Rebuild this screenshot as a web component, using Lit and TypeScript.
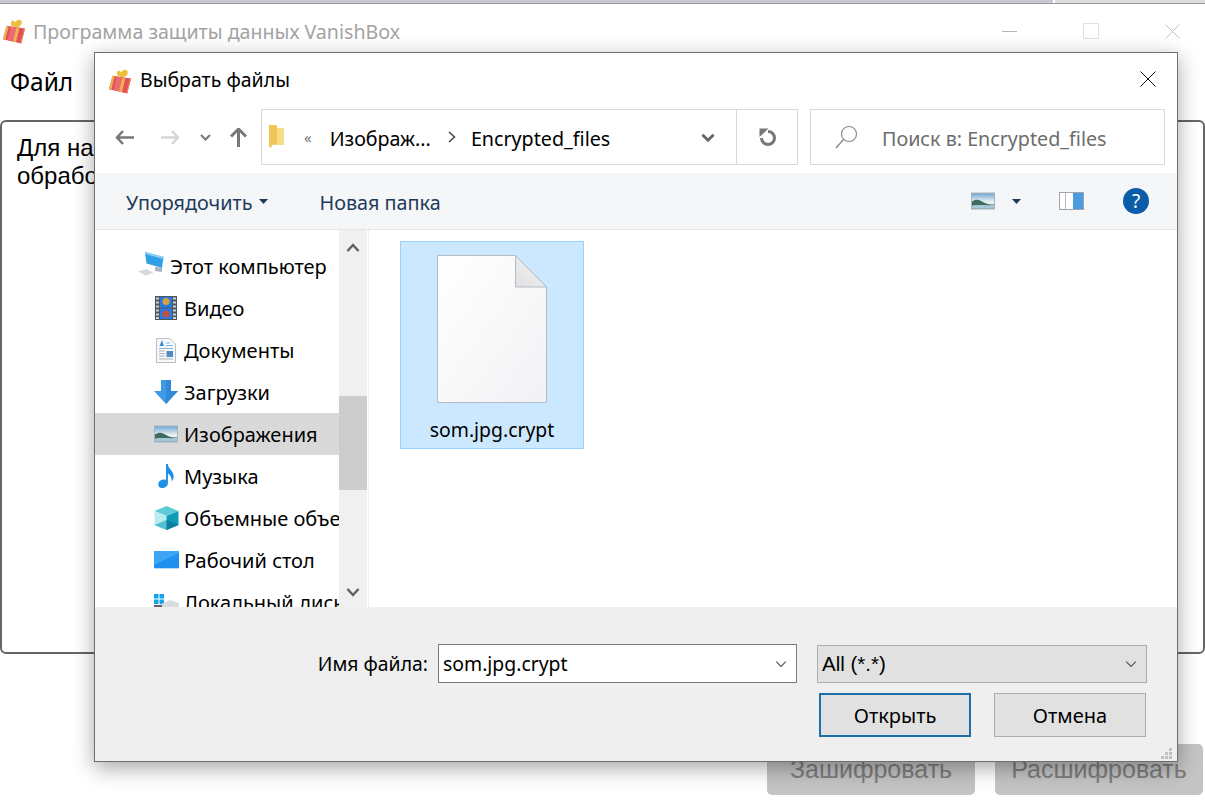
import { LitElement, css, html, svg } from 'lit';
import { customElement } from 'lit/decorators.js';

const gift = (size: number) => html`<svg width=${size} height=${size} viewBox="0 0 26 26">
  <path d="M5 7 L24 10 L20 25.500 L1 21 Z" fill="#e2505c" />
  <path d="M9 8 L18 9.300 L14.500 24 L6 22 Z" fill="#ee6a72" />
  <path d="M4.500 7 L7 7.400 L3.500 21.600 L1 21 Z" fill="#efb04a" />
  <path d="M15 8.800 L18 9.300 L14.500 24.200 L11.500 23.500 Z" fill="#eeb34a" />
  <path d="M23 9.800 L24 10 L20 25.500 L19 25.300 Z" fill="#e8954a" />
  <path d="M10 7 C8 2 11 0 14 3.500 C15 0 20 0 20.500 3 C21 6 18 8.500 14 8.500 Z" fill="#ecbf3c" />
</svg>`;

const landscape = (w: number, h: number) => html`<svg width=${w} height=${h} viewBox="0 0 24 17">
  <defs>
    <linearGradient id="sky" x1="0" y1="0" x2="0" y2="1">
      <stop offset="0" stop-color="#6fa7d4" /><stop offset="0.55" stop-color="#e8eff2" />
    </linearGradient>
  </defs>
  <rect x="0.5" y="0.5" width="23" height="16" fill="url(#sky)" stroke="#a9b3bb" />
  <path d="M1 9 C5 6 9 7 12 9.500 C16 12 20 12 23 12 L23 16 L1 16 Z" fill="#3e6b5d" />
  <path d="M1 13 C8 12 16 13 23 12.500 L23 16 L1 16 Z" fill="#a6c8d6" />
</svg>`;

const icons: Record<string, unknown> = {
  pc: html`<svg width="28" height="28" viewBox="0 0 28 28">
    <path d="M18 15 L25 16 L25 20 L18 19 Z" fill="#aab4bb" />
    <path d="M8 0 L26.500 5 L25 16 L9.500 11.500 Z" fill="#2f9fe6" />
    <path d="M8 0 L26.500 5 L26.200 7 L8.200 2 Z" fill="#8ad0f4" />
    <path d="M.5 19.500 L9 17 L16.500 20.500 L9 23.500 Z" fill="#d5dade" />
  </svg>`,
  video: html`<svg width="22" height="24" viewBox="0 0 22 24">
    <rect x="0" y="0" width="22" height="24" fill="#50555a" />
    <rect x="5" y="1" width="12" height="10.500" fill="#2878e0" />
    <rect x="5" y="12.500" width="12" height="10.500" fill="#2878e0" />
    <circle cx="11" cy="5.500" r="3.500" fill="#d9a23c" />
    <circle cx="11" cy="18" r="3.500" fill="#c2503c" />
    <path d="M1 2.500h3M1 6.500h3M1 10.500h3M1 14.500h3M1 18.500h3M1 22h3M18 2.500h3M18 6.500h3M18 10.500h3M18 14.500h3M18 18.500h3M18 22h3" stroke="#c5d3df" stroke-width="2" />
  </svg>`,
  docs: html`<svg width="20" height="25" viewBox="0 0 20 25">
    <path d="M.5 .5 H14 L19.500 6 V24.500 H.5 Z" fill="#f7f8f9" stroke="#b8bfc6" />
    <path d="M3.500 8 L6 2 L8 8 Z" fill="#3f8fd8" />
    <path d="M10 5 H14 M10 7.500 H17 M3 10.500 H17" stroke="#8cb4d8" />
    <path d="M3 13 H9 M3 15.500 H9 M3 18 H9 M3 21 H17" stroke="#a9b6c0" />
    <rect x="10.500" y="13" width="6.500" height="6" fill="#4e8cc2" />
  </svg>`,
  down: html`<svg width="24" height="24" viewBox="0 0 24 24">
    <path d="M7 0 H17 V11 H24 L12 24 L0 11 H7 Z" fill="#3f9ae6" />
    <path d="M12 0 H17 V11 H24 L12 24 Z" fill="#3389d8" />
  </svg>`,
  pictures: landscape(24, 18),
  music: html`<svg width="18" height="25" viewBox="0 0 18 26">
    <path d="M9 0 H11 C11 5 17 7 17 13 C17 15 16 17 15 18 C15 14 13 11 11 10 V20 C11 23 8 25 5 25 C2 25 1 23 1 21 C1 18 4 16 7 16 C8 16 8.500 16.200 9 16.500 Z" fill="#1e8fe6" />
  </svg>`,
  cube: html`<svg width="25" height="24" viewBox="0 0 24 24">
    <path d="M12 0 L24 5 L12 10 L0 5 Z" fill="#5ccbd6" />
    <path d="M0 5 L12 10 V24 L0 19 Z" fill="#b9ebef" />
    <path d="M12 10 L24 5 V19 L12 24 Z" fill="#0f9ab8" />
    <path d="M0 19 L12 14 V24 Z" fill="#4fc0cf" />
    <path d="M24 19 L12 14 V24 Z" fill="#0b7f9c" />
  </svg>`,
  desktop: html`<svg width="25" height="18" viewBox="0 0 25 18">
    <rect x="0" y="0" width="25" height="18" fill="#1e90f0" />
    <path d="M0 0 H25 V2 L0 14 Z" fill="#3ca6f5" />
    <path d="M0 17.500 H25" stroke="#b7dcf5" />
  </svg>`,
  drive: html`<svg width="25" height="24" viewBox="0 0 25 24">
    <path d="M0 4h4.500v4.500h-4.500zM5.500 4h4.500v4.500h-4.500zM0 9.500h4.500v4.500h-4.500zM5.500 9.500h4.500v4.500h-4.500z" fill="#12a5ea" />
    <path d="M3 16 L16 10 L25 13 V19 L12 24 L3 20 Z" fill="#d8dcdf" />
    <path d="M0 15 L8 15 L8 18 L0 18 Z" fill="#5b6268" />
  </svg>`,
};

const navItems = [
  { icon: 'pc', label: 'Этот компьютер', top: true },
  { icon: 'video', label: 'Видео' },
  { icon: 'docs', label: 'Документы' },
  { icon: 'down', label: 'Загрузки' },
  { icon: 'pictures', label: 'Изображения', selected: true },
  { icon: 'music', label: 'Музыка' },
  { icon: 'cube', label: 'Объемные объекты' },
  { icon: 'desktop', label: 'Рабочий стол' },
  { icon: 'drive', label: 'Локальный диск (C:)' },
];

const chevron = (w: number, color: string, sw = 1) => html`<svg width=${w} height=${Math.ceil(w * 0.6)} viewBox="0 0 10 6">
  <path d="M1 1 L5 5 L9 1" fill="none" stroke=${color} stroke-width=${sw} />
</svg>`;

const caret = html`<svg width="9" height="5" viewBox="0 0 9 5"><path d="M0 0 H9 L4.500 5 Z" fill="#1e3a5a" /></svg>`;

const cross = (size: number, color: string) => html`<svg width=${size} height=${size} viewBox="0 0 16 16">
  ${svg`<path d="M.5 .5 L15.500 15.500 M15.500 .5 L.5 15.500" stroke=${color} stroke-width="1" fill="none" />`}
</svg>`;

@customElement('app-root')
class AppRoot extends LitElement {
  static styles = css`
    :host {
      display: block;
      position: relative;
      width: 1205px;
      height: 803px;
      overflow: hidden;
      background: #fff;
      font-family: 'Liberation Sans', Arial, sans-serif;
      color: #000;
    }

    /* main window behind the dialog */
    .strip {
      display: flex;
      height: 3px;
      border-bottom: 1px solid #9a9aa2;
    }
    .strip i {
      flex: 1;
      background: #c9c9d6;
    }
    .strip b {
      width: 150px;
      margin-left: 2px;
      background: #dcdcdc;
    }

    .titlebar {
      display: flex;
      align-items: center;
      height: 54px;
      padding-left: 2px;
    }
    .titlebar .name {
      margin-left: 6px;
      font: 19.6px 'Noto Sans', sans-serif;
      color: #a3a3a3;
      flex: 1;
    }
    .controls {
      display: flex;
      align-items: center;
      gap: 66px;
      padding-right: 25px;
    }
    .min {
      width: 15px;
      height: 1px;
      background: #b5b5b5;
    }
    .max {
      width: 14px;
      height: 14px;
      border: 1px solid #e2e2e2;
    }

    .menu {
      padding: 8px 10px 0;
      height: 51px;
      box-sizing: border-box;
      font: 24.5px/32px 'Noto Sans', sans-serif;
    }

    .output {
      height: 534px;
      box-sizing: border-box;
      margin: 11px 0 0;
      border: 2px solid #666;
      border-radius: 6px;
      padding: 12px 15px;
      font-size: 24px;
      line-height: 28px;
    }

    .actions {
      display: flex;
      justify-content: flex-end;
      gap: 20px;
      padding: 90px 2px 0 0;
    }
    .actions button {
      width: 208px;
      height: 51px;
      border: none;
      border-radius: 5px;
      background: #c4c4c4;
      color: #7d7d7d;
      font: 25px 'Liberation Sans', Arial, sans-serif;
    }

    /* file dialog */
    .dialog {
      position: absolute;
      left: 94px;
      top: 52px;
      width: 1084px;
      height: 710px;
      box-sizing: border-box;
      display: flex;
      flex-direction: column;
      background: #fff;
      border: 1px solid #6f6f6f;
      box-shadow: 0 6px 20px rgba(0, 0, 0, 0.35);
      font-family: 'Noto Sans', sans-serif;
      font-size: 20px;
    }

    .dlg-title {
      display: flex;
      align-items: center;
      height: 56px;
      flex: none;
      padding: 0 21px 0 13px;
    }
    .dlg-title span {
      flex: 1;
      margin-left: 7px;
      margin-top: -4px;
      font-size: 19.5px;
    }
    .dlg-title svg:last-child {
      margin-top: -4px;
    }

    .navbar {
      display: flex;
      align-items: center;
      height: 56px;
      flex: none;
      margin-bottom: 8px;
      padding: 0 12px 0 20px;
      font-size: 19.7px;
    }
    .nav-btns {
      display: flex;
      align-items: center;
      width: 146px;
      flex: none;
    }
    .nav-btns svg:nth-child(2) {
      margin-left: 27px;
    }
    .nav-btns svg:nth-child(3) {
      margin-left: 20px;
    }
    .nav-btns svg:nth-child(4) {
      margin-left: 19px;
    }

    .address {
      display: flex;
      align-items: center;
      width: 537px;
      height: 56px;
      box-sizing: border-box;
      border: 1px solid #d9d9d9;
      flex: none;
    }
    .address .folder {
      margin-left: 6px;
    }
    .address .lq {
      margin-left: 19px;
      color: #777;
      font-size: 15px;
    }
    .address .crumb {
      margin: 2px 0 0 18px;
    }
    .address .leaf {
      margin-top: 2px;
    }
    .address .sep {
      margin: 0 15px 0 17px;
      display: flex;
    }
    .address .open {
      margin-left: auto;
      width: 56px;
      display: flex;
      justify-content: center;
    }
    .address .refresh {
      display: flex;
      align-items: center;
      justify-content: center;
      width: 60px;
      height: 100%;
      border-left: 1px solid #d9d9d9;
    }

    .search {
      display: flex;
      align-items: center;
      width: 355px;
      height: 56px;
      box-sizing: border-box;
      margin-left: 12px;
      padding-left: 24px;
      border: 1px solid #d9d9d9;
      color: #6d6d6d;
    }
    .search span {
      margin: 2px 0 0 24px;
    }

    .toolbar {
      display: flex;
      align-items: center;
      height: 57px;
      flex: none;
      box-sizing: border-box;
      background: #f5f6f7;
      border-bottom: 1px solid #e5e5e5;
      padding: 0 28px 0 31px;
      color: #1e3a5a;
      font-size: 19.8px;
    }
    .toolbar .sort {
      margin-top: 2px;
    }
    .toolbar .caret {
      margin-left: 7px;
      display: flex;
    }
    .toolbar .new {
      margin: 2px 0 0 51px;
      flex: 1;
    }
    .toolbar .tools {
      display: flex;
      align-items: center;
    }
    .toolbar .tools .caret {
      margin: 0 38px 0 17px;
    }
    .help {
      width: 26px;
      height: 26px;
      margin-left: 39px;
      border-radius: 50%;
      background: #0a5ca8;
      color: #fff;
      text-align: center;
      font-size: 19px;
      line-height: 26px;
    }

    .body {
      flex: 1;
      display: flex;
      min-height: 0;
    }
    .tree {
      width: 244px;
      flex: none;
      overflow: hidden;
      padding-top: 15px;
      box-sizing: border-box;
    }
    .row {
      display: flex;
      align-items: center;
      height: 42px;
      padding-left: 58px;
      white-space: nowrap;
    }
    .row.top {
      padding-left: 42px;
    }
    .row.selected {
      background: #d9d9d9;
    }
    .row .ico {
      width: 26px;
      display: flex;
      justify-content: center;
      flex: none;
    }
    .row.top .ico {
      width: 28px;
    }
    .row .label {
      margin-left: 5px;
    }

    .scroll {
      width: 28px;
      flex: none;
      display: flex;
      flex-direction: column;
      align-items: center;
      background: #f0f0f0;
    }
    .scroll .btn {
      height: 34px;
      display: flex;
      align-items: center;
      justify-content: center;
      flex: none;
    }
    .scroll .btn:last-child {
      margin-top: auto;
      height: 30px;
    }
    .thumb {
      width: 100%;
      height: 94px;
      margin-top: 132px;
      background: #cdcdcd;
      flex: none;
    }

    .files {
      flex: 1;
      margin-left: 1px;
      padding: 11px 0 0 31px;
      border-left: 1px solid #eee;
    }
    .file {
      width: 184px;
      height: 208px;
      box-sizing: border-box;
      display: flex;
      flex-direction: column;
      align-items: center;
      padding-top: 13px;
      background: #cce8ff;
      border: 1px solid #99d1ff;
      font-size: 19.4px;
    }
    .file span {
      margin-top: 13px;
    }

    .bottom {
      height: 154px;
      flex: none;
      box-sizing: border-box;
      background: #efefef;
      padding: 37px 30px 0 0;
      font-size: 19.4px;
    }
    .name-row {
      display: flex;
      align-items: center;
      justify-content: flex-end;
    }
    .input {
      display: flex;
      align-items: center;
      justify-content: space-between;
      width: 359px;
      height: 39px;
      box-sizing: border-box;
      margin-left: 10px;
      padding: 0 9px 0 4px;
      background: #fff;
      border: 1px solid #7a7a7a;
    }
    .combo {
      display: flex;
      align-items: center;
      justify-content: space-between;
      width: 330px;
      height: 38px;
      box-sizing: border-box;
      margin-left: 20px;
      padding: 0 9px 0 4px;
      background: #e1e1e1;
      border: 1px solid #adadad;
      font: 20.5px 'Liberation Sans', Arial, sans-serif;
    }
    .btn-row {
      display: flex;
      justify-content: flex-end;
      gap: 23px;
      margin: 10px 1px 0 0;
    }
    .btn-row button {
      width: 152px;
      height: 44px;
      box-sizing: border-box;
      background: #e1e1e1;
      border: 1px solid #adadad;
      color: #000;
      font: 20px 'Noto Sans', sans-serif;
    }
    .btn-row button.default {
      border: 2px solid #1c6fa8;
    }
    .grip {
      position: absolute;
      right: 5px;
      bottom: 2px;
    }
  `;

  private renderDialog() {
    return html`
      <div class="dialog">
        <div class="dlg-title">${gift(25)}<span>Выбрать файлы</span>${cross(16, '#111')}</div>

        <div class="navbar">
          <div class="nav-btns">
            <svg width="19" height="15" viewBox="0 0 19 15"><path d="M8 1 L2 7.500 L8 14 M2 7.500 H19" fill="none" stroke="#777" stroke-width="2.500" /></svg>
            <svg width="19" height="15" viewBox="0 0 19 15"><path d="M11 1 L17 7.500 L11 14 M17 7.500 H0" fill="none" stroke="#d6d6d6" stroke-width="2.500" /></svg>
            <svg width="11" height="7" viewBox="0 0 11 7"><path d="M1 1 L5.500 5.500 L10 1" fill="none" stroke="#777" stroke-width="2" /></svg>
            <svg width="17" height="19" viewBox="0 0 17 19"><path d="M1 8.500 L8.500 1 L16 8.500 M8.500 1 V19" fill="none" stroke="#777" stroke-width="3" /></svg>
          </div>
          <div class="address">
            <svg class="folder" width="17" height="24" viewBox="0 0 17 24">
              <path d="M1 3 H16 V20 H4 L3 23 L1 21 Z" fill="#f5dd88" />
              <path d="M1 0 H9 V19 L4 20 L3 23 L1 21 Z" fill="#eec65a" />
            </svg>
            <span class="lq">«</span>
            <span class="crumb">Изображ...</span>
            <span class="sep"><svg width="8" height="12" viewBox="0 0 8 12"><path d="M1 1 L6.500 6 L1 11" fill="none" stroke="#444" stroke-width="1.500" /></svg></span>
            <span class="leaf">Encrypted_files</span>
            <span class="open">${chevron(14, '#666', 2)}</span>
            <span class="refresh">
              <svg width="18" height="18" viewBox="0 0 18 18">
                <path d="M10 3.500 A6.500 6.500 0 1 1 3.500 10" fill="none" stroke="#777" stroke-width="3" />
                <path d="M1.500 .5 H10.500 L1.500 9 Z" fill="#777" />
              </svg>
            </span>
          </div>
          <div class="search">
            <svg width="23" height="24" viewBox="0 0 23 24">
              <circle cx="14" cy="9" r="7.500" fill="none" stroke="#8c8c8c" stroke-width="1.200" />
              <path d="M8.500 14.500 L1 23" stroke="#8c8c8c" stroke-width="1.500" />
            </svg>
            <span>Поиск в: Encrypted_files</span>
          </div>
        </div>

        <div class="toolbar">
          <span class="sort">Упорядочить</span><span class="caret">${caret}</span>
          <span class="new">Новая папка</span>
          <div class="tools">
            ${landscape(24, 18)}
            <span class="caret">${caret}</span>
            <svg width="25" height="18" viewBox="0 0 25 18">
              <rect x=".5" y=".5" width="24" height="17" fill="#fff" stroke="#9fa5aa" />
              <rect x="14" y="1" width="10" height="16" fill="#4a9be0" />
              <path d="M6.500 1 V17" stroke="#b5bbc0" />
            </svg>
            <div class="help">?</div>
          </div>
        </div>

        <div class="body">
          <div class="tree">
            ${navItems.map(
              (item) => html`<div class="row ${item.top ? 'top' : ''} ${item.selected ? 'selected' : ''}">
                <span class="ico">${icons[item.icon]}</span><span class="label">${item.label}</span>
              </div>`,
            )}
          </div>
          <div class="scroll">
            <div class="btn"><svg width="14" height="9" viewBox="0 0 14 9"><path d="M1.500 8 L7 2 L12.500 8" fill="none" stroke="#606060" stroke-width="2.500" /></svg></div>
            <div class="thumb"></div>
            <div class="btn"><svg width="14" height="9" viewBox="0 0 14 9"><path d="M1.500 1 L7 7 L12.500 1" fill="none" stroke="#606060" stroke-width="2.500" /></svg></div>
          </div>
          <div class="files">
            <div class="file">
              <svg width="110" height="148" viewBox="0 0 110 148">
                <defs>
                  <linearGradient id="page" x1="0" y1="0" x2="1" y2="1">
                    <stop offset="0" stop-color="#ffffff" /><stop offset="1" stop-color="#f1f2f4" />
                  </linearGradient>
                  <linearGradient id="fold" x1="0" y1="1" x2="1" y2="0">
                    <stop offset="0" stop-color="#dfdfdf" /><stop offset="1" stop-color="#f6f6f6" />
                  </linearGradient>
                </defs>
                <path d="M.5 .5 H78.500 L109.500 32 V147.500 H.5 Z" fill="url(#page)" stroke="#b2bcc6" />
                <path d="M78.500 .5 L109.500 32 H78.500 Z" fill="url(#fold)" stroke="#b2bcc6" />
              </svg>
              <span>som.jpg.crypt</span>
            </div>
          </div>
        </div>

        <div class="bottom">
          <div class="name-row">
            <span>Имя файла:</span>
            <div class="input"><span>som.jpg.crypt</span>${chevron(12, '#555')}</div>
            <div class="combo"><span>All (*.*)</span>${chevron(12, '#555')}</div>
          </div>
          <div class="btn-row">
            <button class="default">Открыть</button>
            <button>Отмена</button>
          </div>
        </div>

        <svg class="grip" width="11" height="11" viewBox="0 0 11 11">
          <path d="M8 0h3v3h-3zM4 4h3v3h-3zM8 4h3v3h-3zM0 8h3v3h-3zM4 8h3v3h-3zM8 8h3v3h-3z" fill="#c2c2c2" />
        </svg>
      </div>
    `;
  }

  protected render(): unknown {
    return html`
      <div class="strip"><i></i><b></b></div>
      <div class="titlebar">
        ${gift(25)}
        <span class="name">Программа защиты данных VanishBox</span>
        <div class="controls">
          <div class="min"></div>
          <div class="max"></div>
          ${cross(15, '#bdbdbd')}
        </div>
      </div>
      <div class="menu">Файл</div>
      <div class="output">Для начала работы выберите файл для<br />обработки</div>
      <div class="actions">
        <button>Зашифровать</button>
        <button>Расшифровать</button>
      </div>
      ${this.renderDialog()}
    `;
  }
}
